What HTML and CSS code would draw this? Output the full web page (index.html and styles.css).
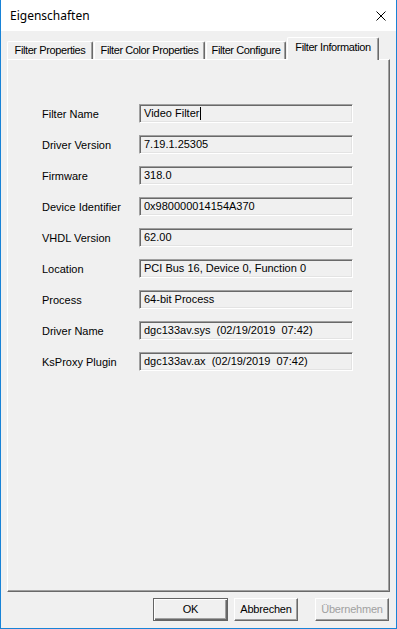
FILE: index.html
```html
<!DOCTYPE html>
<html lang="de">
<head>
  <meta charset="UTF-8">
  <title>Eigenschaften</title>
  <link rel="stylesheet" href="styles.css">
</head>
<body>
  <div class="window">
    <!-- Titelleiste -->
    <div class="titlebar">
      <span class="title">Eigenschaften</span>
      <svg class="close" width="10" height="10" viewBox="0 0 10 10">
        <path d="M0.5 0.5 L9.5 9.5 M9.5 0.5 L0.5 9.5" stroke="#000" stroke-width="1" fill="none"/>
      </svg>
    </div>
    <div class="content">
      <!-- Reiter -->
      <div class="tabs">
        <div class="tab t1">Filter Properties</div>
        <div class="tab t2">Filter Color Properties</div>
        <div class="tab t3">Filter Configure</div>
        <div class="tab active">Filter Information</div>
      </div>
      <div class="panel">
        <div class="form">
          <div class="row"><span class="label">Filter Name</span><span class="field">Video Filter<span class="caret"></span></span></div>
          <div class="row"><span class="label">Driver Version</span><span class="field">7.19.1.25305</span></div>
          <div class="row"><span class="label">Firmware</span><span class="field">318.0</span></div>
          <div class="row"><span class="label">Device Identifier</span><span class="field">0x980000014154A370</span></div>
          <div class="row"><span class="label">VHDL Version</span><span class="field">62.00</span></div>
          <div class="row"><span class="label">Location</span><span class="field">PCI Bus 16, Device 0, Function 0</span></div>
          <div class="row"><span class="label">Process</span><span class="field">64-bit Process</span></div>
          <div class="row"><span class="label">Driver Name</span><span class="field">dgc133av.sys&nbsp; (02/19/2019&nbsp; 07:42)</span></div>
          <div class="row"><span class="label">KsProxy Plugin</span><span class="field">dgc133av.ax&nbsp; (02/19/2019&nbsp; 07:42)</span></div>
        </div>
      </div>
      <!-- Schaltflaechen -->
      <div class="buttons">
        <div class="btn default">OK</div>
        <div class="btn cancel">Abbrechen</div>
        <div class="btn disabled">Übernehmen</div>
      </div>
    </div>
  </div>
</body>
</html>
```

FILE: styles.css
```css
* {
  box-sizing: border-box;
  margin: 0;
  padding: 0;
}
body {
  font-family: 'Liberation Sans', Arial, sans-serif;
  font-size: 11px;
  color: #000;
  background: #fff;
}
.window {
  width: 397px;
  height: 629px;
  display: flex;
  flex-direction: column;
  background: #f0f0f0;
  border: 1px solid #1883d7;
  border-top: 0;
}
/* Titelleiste */
.titlebar {
  height: 31px;
  background: #fff;
  display: flex;
  align-items: center;
  justify-content: space-between;
  padding: 0 10px 0 9px;
}
.title {
  font-family: 'Noto Sans', 'Open Sans', sans-serif;
  font-size: 12px;
}
.close {
  display: block;
}
.content {
  flex: 1;
  display: flex;
  flex-direction: column;
  padding: 6px 6px 0 6px;
}
/* Reiter */
.tabs {
  display: flex;
  align-items: flex-end;
  height: 22px;
}
.tab {
  height: 18px;
  line-height: 17px;
  text-align: center;
  letter-spacing: -0.4px;
  border: 1px solid #fff;
  border-bottom: 0;
  border-right-color: #696969;
  box-shadow: inset -1px 0 #a0a0a0;
  border-radius: 2px 2px 0 0;
  white-space: nowrap;
}
.t1 { width: 86px; margin-right: 1px; }
.t2 { width: 111px; margin-right: 1px; }
.t3 { width: 80px; }
.tab.active {
  width: 92px;
  height: 23px;
  line-height: 18px;
  margin-bottom: -1px;
  margin-left: 1px;
  position: relative;
  z-index: 1;
  background: #f0f0f0;
}
.panel {
  height: 533px;
  border: 1px solid;
  border-color: #fff #696969 #696969 #fff;
  box-shadow: inset -1px -1px #a0a0a0;
  padding: 44px 0 0 34px;
}
.form {
  display: flex;
  flex-direction: column;
  gap: 12px;
}
.row {
  display: flex;
  align-items: center;
  height: 19px;
}
.label {
  width: 97px;
}
.field {
  width: 214px;
  height: 19px;
  line-height: 17px;
  padding-left: 4px;
  border: 1px solid;
  border-color: #a0a0a0 #fff #fff #a0a0a0;
  box-shadow: inset 1px 1px #696969, inset -1px -1px #e3e3e3;
  white-space: nowrap;
  display: flex;
  align-items: center;
}
.caret {
  display: inline-block;
  width: 1px;
  height: 13px;
  background: #000;
  margin-left: 1px;
}
/* Schaltflaechen */
.buttons {
  display: flex;
  justify-content: flex-end;
  padding: 6px 1px 0 0;
}
.btn {
  height: 23px;
  line-height: 21px;
  text-align: center;
  letter-spacing: -0.2px;
  border: 1px solid;
  border-color: #fff #696969 #696969 #fff;
  box-shadow: inset -1px -1px #a0a0a0;
}
.btn.default {
  width: 75px;
  border-color: #646464;
  box-shadow: inset 1px 1px #fff, inset -1px -1px #696969, inset -2px -2px #a0a0a0;
  margin-right: 6px;
}
.btn.cancel {
  width: 64px;
  margin-right: 17px;
}
.btn.disabled {
  width: 74px;
  color: #a0a0a0;
}
```
